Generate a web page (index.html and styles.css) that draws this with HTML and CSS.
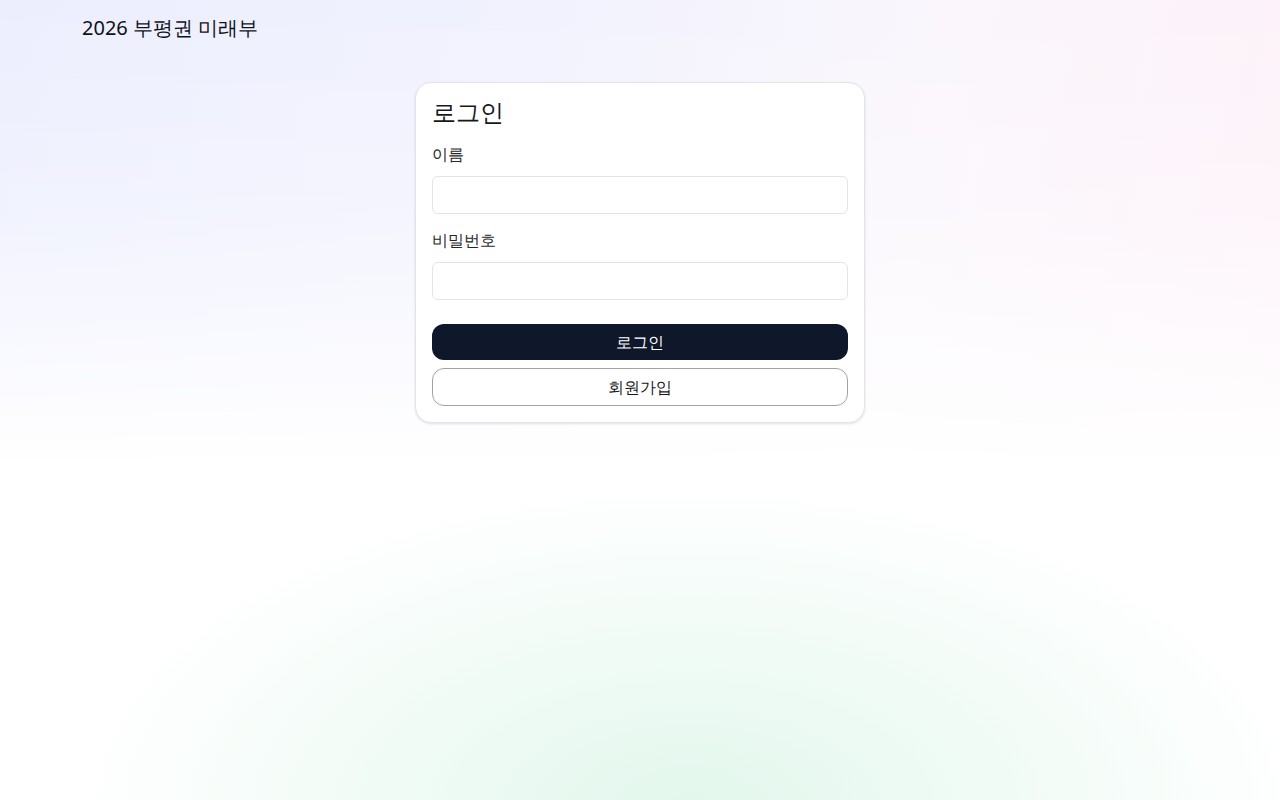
FILE: index.html
```html
<!DOCTYPE html>
<html>
<head>
<meta charset="utf-8">
<title>로그인 - 2026 부평권 미래부</title>
<link rel="stylesheet" href="styles.css">
</head>
<body>
<div class="page">
  <header class="topbar">
    <div class="brand">2026 부평권 미래부</div>
  </header>
  <main class="main">
    <form class="card">
      <h1 class="title">로그인</h1>
      <div class="field">
        <label class="label" for="name">이름</label>
        <input class="input" id="name" type="text">
      </div>
      <div class="field">
        <label class="label" for="pw">비밀번호</label>
        <input class="input" id="pw" type="password">
      </div>
      <div class="actions">
        <button class="btn btn-primary" type="button">로그인</button>
        <button class="btn btn-outline" type="button">회원가입</button>
      </div>
    </form>
  </main>
</div>
</body>
</html>
```
FILE: styles.css
```css
* { box-sizing: border-box; }
html, body { margin: 0; padding: 0; height: 100%; }
body {
  font-family: "Noto Sans", sans-serif;
  color: #18181b;
  background-color: #ffffff;
  background-image:
    radial-gradient(ellipse 620px 330px at 690px 810px, #e2f7ec 0%, rgba(226,247,236,0.55) 45%, rgba(255,255,255,0) 100%);
  background-repeat: no-repeat;
  min-height: 800px;
  position: relative;
}
.page {
  min-height: 800px;
  position: relative;
}
.page::before {
  content: "";
  position: absolute;
  left: 0; top: 0; right: 0;
  height: 470px;
  background: linear-gradient(100deg, #eceefe 0%, #f1f2fe 40%, #faf6fc 70%, #fdf1f8 100%);
  -webkit-mask-image: linear-gradient(to bottom, #000 0%, rgba(0,0,0,0.75) 45%, transparent 100%);
  mask-image: linear-gradient(to bottom, #000 0%, rgba(0,0,0,0.75) 45%, transparent 100%);
  z-index: 0;
}
.topbar, .main { position: relative; z-index: 1; }
.topbar {
  padding: 12px 82px 0 82px;
  height: 58px;
}
.brand {
  font-size: 20px;
  line-height: 32px;
  color: #111118;
}
.main {
  display: flex;
  justify-content: center;
  padding-top: 24px;
}
.card {
  width: 450px;
  background: #ffffff;
  border: 1px solid #e4e4e7;
  border-radius: 16px;
  box-shadow: 0 1px 3px rgba(0,0,0,0.08), 0 1px 2px rgba(0,0,0,0.04);
  padding: 13px 16px 16px 16px;
  display: flex;
  flex-direction: column;
}
.title {
  margin: 0 0 14px 0;
  font-size: 24px;
  font-weight: 400;
  line-height: 32px;
  color: #18181b;
}
.field {
  display: flex;
  flex-direction: column;
  gap: 10px;
  margin-bottom: 14px;
}
.label {
  font-size: 16px;
  line-height: 24px;
  color: #27272a;
}
.input {
  height: 38px;
  width: 100%;
  border: 1px solid #e4e4e7;
  border-radius: 6px;
  background: #fff;
  font: inherit;
  padding: 0 10px;
  outline: none;
}
.actions {
  display: flex;
  flex-direction: column;
  gap: 8px;
  margin-top: 10px;
}
.btn {
  width: 100%;
  font-family: inherit;
  font-size: 16px;
  border-radius: 12px;
  cursor: pointer;
}
.btn-primary {
  height: 36px;
  background: #0f172a;
  color: #ffffff;
  border: none;
}
.btn-outline {
  height: 38px;
  background: #ffffff;
  color: #18181b;
  border: 1px solid #a1a1aa;
}
```
